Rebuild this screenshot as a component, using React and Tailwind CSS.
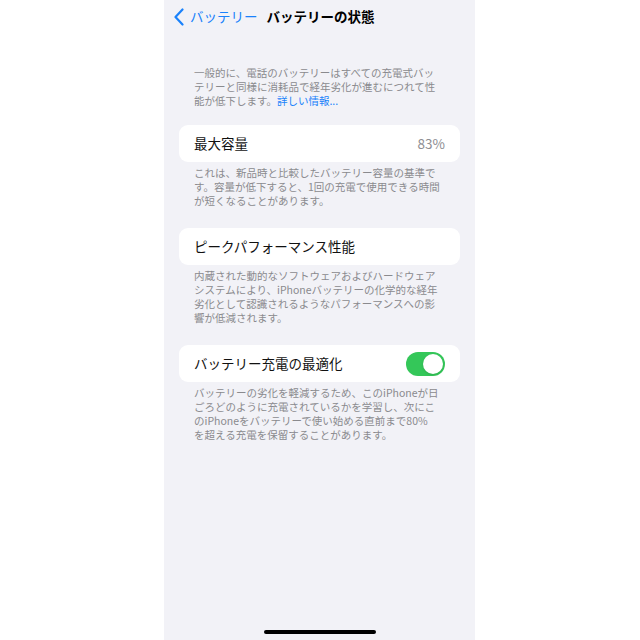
import React from "react";

function Toggle() {
  return (
    <div className="w-[39px] h-[24px] rounded-full bg-[#34c759] flex items-center justify-end px-[2px]">
      <div className="w-[20px] h-[20px] rounded-full bg-white shadow-sm" />
    </div>
  );
}

function Note({ children }) {
  return (
    <p className="px-[30px] text-[10.5px] leading-[14px] text-[#8a8a8e] tracking-[0px]">
      {children}
    </p>
  );
}

function Card({ children }) {
  return (
    <div className="mx-[15px] h-[37px] bg-white rounded-[9px] px-[15px] flex items-center justify-between text-[13.5px] text-[#111]">
      {children}
    </div>
  );
}

export default function App() {
  return (
    <div
      className="w-full h-[640px] bg-white flex justify-center"
      style={{ fontFamily: '"Noto Sans CJK JP", "Noto Sans", sans-serif' }}
    >
      <div className="w-[311px] h-full bg-[#f2f2f7] flex flex-col relative ml-[-1px]">
        <div className="h-[32px] flex items-center pl-[9px]">
          <svg width="12" height="18" viewBox="0 0 12 18" className="mt-[1px]">
            <path d="M9.5 1.5 L2.5 9 L9.5 16.5" fill="none" stroke="#1a82fb" strokeWidth="2.2" strokeLinecap="round" strokeLinejoin="round" />
          </svg>
          <span className="ml-[5px] text-[13.5px] text-[#1a82fb]">バッテリー</span>
          <span className="ml-[9px] text-[13.5px] font-bold text-black">バッテリーの状態</span>
        </div>

        <div className="mt-[34px]">
          <Note>
            一般的に、電話のバッテリーはすべての充電式バッ<br />
            テリーと同様に消耗品で経年劣化が進むにつれて性<br />
            能が低下します。<span className="text-[#1a82fb]">詳しい情報...</span>
          </Note>
        </div>

        <div className="mt-[17px]">
          <Card>
            <span>最大容量</span>
            <span className="text-[#8e8e93]">83%</span>
          </Card>
        </div>
        <div className="mt-[4px]">
          <Note>
            これは、新品時と比較したバッテリー容量の基準で<br />
            す。容量が低下すると、1回の充電で使用できる時間<br />
            が短くなることがあります。
          </Note>
        </div>

        <div className="mt-[20px]">
          <Card>
            <span>ピークパフォーマンス性能</span>
          </Card>
        </div>
        <div className="mt-[4px]">
          <Note>
            内蔵された動的なソフトウェアおよびハードウェア<br />
            システムにより、iPhoneバッテリーの化学的な経年<br />
            劣化として認識されるようなパフォーマンスへの影<br />
            響が低減されます。
          </Note>
        </div>

        <div className="mt-[20px]">
          <Card>
            <span>バッテリー充電の最適化</span>
            <Toggle />
          </Card>
        </div>
        <div className="mt-[4px]">
          <Note>
            バッテリーの劣化を軽減するため、このiPhoneが日<br />
            ごろどのように充電されているかを学習し、次にこ<br />
            のiPhoneをバッテリーで使い始める直前まで80%<br />
            を超える充電を保留することがあります。
          </Note>
        </div>

        <div className="mt-auto mb-[6px] flex justify-center">
          <div className="w-[112px] h-[4px] rounded-full bg-black" />
        </div>
      </div>
    </div>
  );
}
